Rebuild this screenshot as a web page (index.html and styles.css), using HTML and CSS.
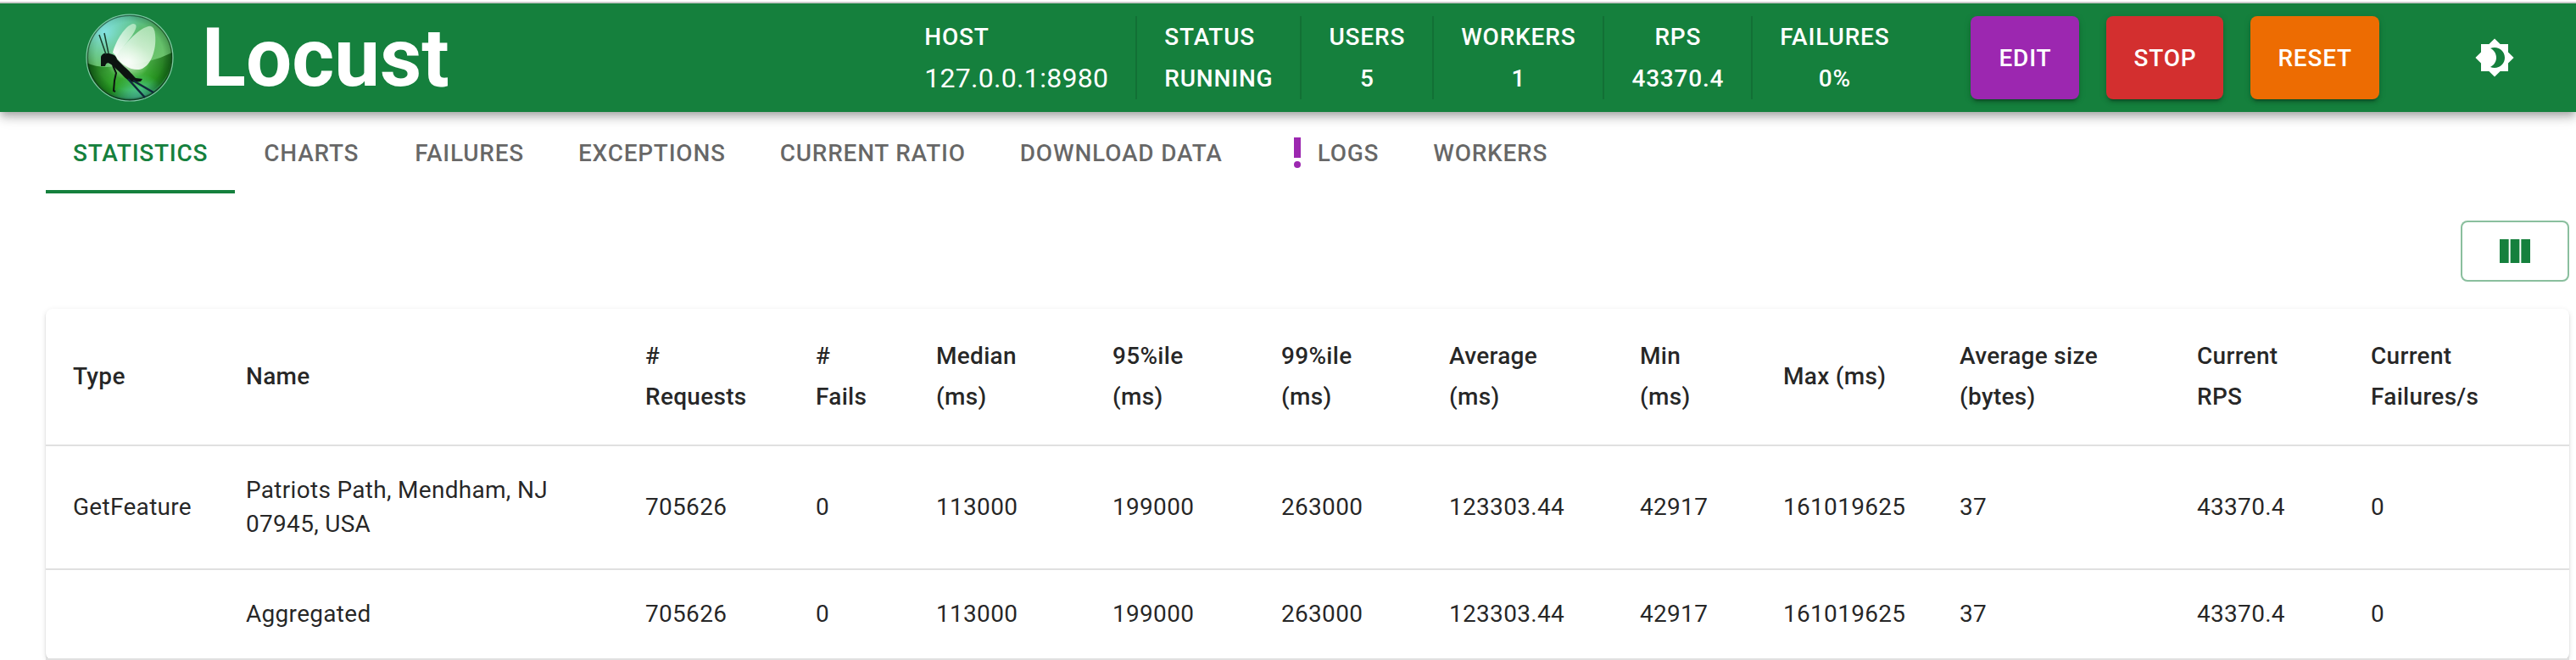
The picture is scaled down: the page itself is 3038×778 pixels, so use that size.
FILE: index.html
```html
<!DOCTYPE html>
<html lang="en">
<head>
<meta charset="utf-8">
<title>Locust</title>
<link rel="stylesheet" href="styles.css">
</head>
<body>
<header class="appbar">
  <div class="brand">
    <svg class="logo" viewBox="0 0 104 104" aria-hidden="true">
      <defs>
        <linearGradient id="orb" x1="0.35" y1="0" x2="0.6" y2="1">
          <stop offset="0" stop-color="#5fc8b0"/>
          <stop offset="0.25" stop-color="#5cba68"/>
          <stop offset="0.6" stop-color="#6cc46c"/>
          <stop offset="0.8" stop-color="#3fb437"/>
          <stop offset="1" stop-color="#3fbf90"/>
        </linearGradient>
        <radialGradient id="rim" cx="0.5" cy="0.48" r="0.52">
          <stop offset="0.75" stop-color="#043c12" stop-opacity="0"/>
          <stop offset="0.92" stop-color="#043c12" stop-opacity="0.3"/>
          <stop offset="1" stop-color="#012208" stop-opacity="0.9"/>
        </radialGradient>
        <radialGradient id="sky" cx="0.2" cy="0.2" r="0.42">
          <stop offset="0" stop-color="#86e4e8" stop-opacity="0.95"/>
          <stop offset="1" stop-color="#7fe0d0" stop-opacity="0"/>
        </radialGradient>
        <radialGradient id="glow" cx="0.5" cy="0.5" r="0.5">
          <stop offset="0" stop-color="#fff" stop-opacity="0.9"/>
          <stop offset="1" stop-color="#c9f5c4" stop-opacity="0"/>
        </radialGradient>
        <linearGradient id="wing" x1="0.2" y1="0.9" x2="0.7" y2="0">
          <stop offset="0" stop-color="#fff" stop-opacity="0.9"/>
          <stop offset="1" stop-color="#d5f5d9" stop-opacity="0.66"/>
        </linearGradient>
        <linearGradient id="shade" x1="0" y1="0" x2="1" y2="0">
          <stop offset="0" stop-color="#064a05" stop-opacity="0.9"/>
          <stop offset="0.3" stop-color="#128a0a" stop-opacity="0.5"/>
          <stop offset="0.65" stop-color="#1b9412" stop-opacity="0.35"/>
          <stop offset="1" stop-color="#064a05" stop-opacity="0.8"/>
        </linearGradient>
        <radialGradient id="teal" cx="0.6" cy="1" r="0.32">
          <stop offset="0" stop-color="#5fd8c0" stop-opacity="0.9"/>
          <stop offset="1" stop-color="#5fd8c0" stop-opacity="0"/>
        </radialGradient>
      </defs>
      <circle cx="52" cy="52" r="51" fill="url(#orb)"/>
      <path d="M1 58Q18 66 42 61Q76 59 102 46A51 51 0 0 1 1 58Z" fill="url(#shade)"/>
      <circle cx="52" cy="52" r="51" fill="url(#teal)"/>
      <circle cx="52" cy="52" r="51" fill="url(#rim)"/>
      <circle cx="52" cy="52" r="50" fill="url(#sky)"/>
      <circle cx="52" cy="52" r="49.6" fill="none" stroke="#052d14" stroke-opacity="0.55" stroke-width="1.2"/>
      <circle cx="52" cy="52" r="51" fill="none" stroke="#9adfc0" stroke-opacity="0.8" stroke-width="1.2"/>
      <ellipse cx="50" cy="56" rx="26" ry="22" fill="url(#glow)"/>
      <path d="M32 46C36 31 47 14 56 12Q61 12 59 18C55 29 43 39 36 50Z" fill="url(#wing)"/>
      <path d="M35 50C46 37 60 19 74 15Q81 13 82 25C84 44 76 64 63 66C53 67 42 60 35 50Z" fill="url(#wing)"/>
      <path d="M18 52C18 48 22 46 26 47C31 47 36 49 37 54L46 63C51 67 56 73 59 76L67 77L65 80L58 81C53 81 47 77 43 72C39 68 34 63 30 60C26 57 24 58 23 62H18Z" fill="#0c1310"/>
      <path d="M24 48L16 25M27 47L22 23" stroke="#1a3d2c" stroke-width="1.5" fill="none"/>
      <path d="M32 61L36 70L34 79L33 91L35 92" stroke="#0c1310" stroke-width="2" fill="none"/>
      <path d="M50 77L70 99M56 79L80 93" stroke="#10283b" stroke-width="2.5" fill="none"/>
    </svg>
    <span class="brand-name">Locust</span>
  </div>
  <div class="toolbar">
    <div class="stats">
      <div class="stat stat-start"><span>HOST</span><span class="host">127.0.0.1:8980</span></div>
      <div class="stat stat-start"><span>STATUS</span><span>RUNNING</span></div>
      <div class="stat"><span>USERS</span><span>5</span></div>
      <div class="stat"><span>WORKERS</span><span>1</span></div>
      <div class="stat"><span>RPS</span><span>43370.4</span></div>
      <div class="stat"><span>FAILURES</span><span>0%</span></div>
    </div>
    <div class="actions">
      <button class="btn btn-edit">EDIT</button>
      <button class="btn btn-stop">STOP</button>
      <button class="btn btn-reset">RESET</button>
    </div>
    <button class="theme-toggle" aria-label="Toggle theme">
      <svg class="icon" viewBox="0 0 24 24"><path d="M20 8.69V4h-4.69L12 .69 8.69 4H4v4.69L.69 12 4 15.31V20h4.69L12 23.31 15.31 20H20v-4.69L23.31 12 20 8.69zM12 18c-.89 0-1.74-.2-2.5-.55C11.56 16.5 13 14.42 13 12s-1.44-4.5-3.5-5.45C10.26 6.2 11.11 6 12 6c3.31 0 6 2.69 6 6s-2.69 6-6 6z"/></svg>
    </button>
  </div>
</header>
<main class="content">
  <nav class="tabs">
    <a class="tab tab-active">STATISTICS</a>
    <a class="tab">CHARTS</a>
    <a class="tab">FAILURES</a>
    <a class="tab">EXCEPTIONS</a>
    <a class="tab">CURRENT RATIO</a>
    <a class="tab tab-wide">DOWNLOAD DATA</a>
    <a class="tab"><svg class="icon alert" viewBox="0 0 24 24"><circle cx="12" cy="19" r="2"/><path d="M10 3h4v12h-4z"/></svg>LOGS</a>
    <a class="tab">WORKERS</a>
  </nav>
  <div class="table-tools">
    <button class="columns-btn" aria-label="Select columns">
      <svg class="icon" viewBox="0 0 24 24"><path d="M14.67 5v14H9.33V5h5.34zm1 14H21V5h-5.33v14zm-7.34 0V5H3v14h5.33z"/></svg>
    </button>
  </div>
  <div class="paper">
    <table class="table">
      <colgroup><col class="c1"><col class="c2"><col class="c3"><col class="c4"><col class="c5"><col class="c6"><col class="c7"><col class="c8"><col class="c9"><col class="c10"><col class="c11"><col class="c12"><col class="c13"></colgroup>
      <thead>
        <tr><th>Type</th><th>Name</th><th>#<br>Requests</th><th>#<br>Fails</th><th>Median<br>(ms)</th><th>95%ile<br>(ms)</th><th>99%ile<br>(ms)</th><th>Average<br>(ms)</th><th>Min<br>(ms)</th><th>Max (ms)</th><th>Average size<br>(bytes)</th><th>Current<br>RPS</th><th>Current<br>Failures/s</th></tr>
      </thead>
      <tbody>
        <tr><td>GetFeature</td><td>Patriots Path, Mendham, NJ<br>07945, USA</td><td>705626</td><td>0</td><td>113000</td><td>199000</td><td>263000</td><td>123303.44</td><td>42917</td><td>161019625</td><td>37</td><td>43370.4</td><td>0</td></tr>
        <tr><td></td><td>Aggregated</td><td>705626</td><td>0</td><td>113000</td><td>199000</td><td>263000</td><td>123303.44</td><td>42917</td><td>161019625</td><td>37</td><td>43370.4</td><td>0</td></tr>
      </tbody>
    </table>
  </div>
</main>
</body>
</html>
```
FILE: styles.css
```css
* { box-sizing: border-box; }
html { overflow: hidden; }
body {
  margin: 0;
  padding-top: 2px;
  background: #fff;
  color: rgba(0, 0, 0, 0.87);
  font-family: Roboto, "Liberation Sans", sans-serif;
  font-size: 28px;
}
button { font: inherit; letter-spacing: inherit; }
.icon { width: 48px; height: 48px; fill: currentColor; flex: none; }

.appbar {
  display: flex;
  justify-content: space-between;
  align-items: center;
  height: 130px;
  padding: 0 56px 0 101px;
  border-top: 2px solid #ccc;
  background: #15803d;
  color: #fff;
  box-shadow: 0 4px 8px -2px rgba(0, 0, 0, 0.2), 0 8px 10px 0 rgba(0, 0, 0, 0.14), 0 2px 20px 0 rgba(0, 0, 0, 0.12);
  clip-path: inset(0 0 -40px 0);
}
.brand { display: flex; align-items: center; gap: 33px; }
.logo { width: 104px; height: 104px; }
.brand-name { font-size: 96px; font-weight: 700; line-height: 1.167; }

.toolbar { display: flex; align-items: center; font-weight: 500; letter-spacing: 0.8px; }
.stats { display: flex; }
.stat {
  display: flex;
  flex-direction: column;
  align-items: center;
  padding: 0 32px;
  line-height: 49px;
}
.stat + .stat { border-left: 2px solid rgba(0, 0, 0, 0.12); }
.stat-start { align-items: flex-start; }
.host { font-size: 32px; font-weight: 400; line-height: 48px; letter-spacing: 0.3px; }

.actions { display: flex; gap: 32px; margin-left: 64px; }
.btn {
  min-width: 128px;
  height: 98px;
  padding: 0 32px;
  border: 0;
  border-radius: 8px;
  color: #fff;
  box-shadow: 0 6px 2px -4px rgba(0, 0, 0, 0.2), 0 4px 4px 0 rgba(0, 0, 0, 0.14), 0 2px 10px 0 rgba(0, 0, 0, 0.12);
}
.btn-edit { background: #9c27b0; }
.btn-stop { background: #d32f2f; }
.btn-reset { background: #ed6c02; }
.theme-toggle {
  display: flex;
  margin-left: 96px;
  padding: 16px;
  border: 0;
  background: none;
  color: #fff;
}

.content { padding: 0 8px 0 54px; }
.tabs { display: flex; height: 96px; }
.tab {
  display: flex;
  align-items: center;
  justify-content: center;
  min-width: 180px;
  padding: 0 32px;
  border-bottom: 4px solid transparent;
  border-top: 4px solid transparent;
  color: rgba(0, 0, 0, 0.6);
  font-weight: 500;
  letter-spacing: 0.75px;
}
.tab-wide { letter-spacing: 0.82px; }
.tab-active { color: #15803d; border-bottom-color: #15803d; }
.alert { color: #9c27b0; }

.table-tools { display: flex; justify-content: flex-end; padding: 32px 0; }
.columns-btn {
  display: flex;
  align-items: center;
  justify-content: center;
  width: 128px;
  height: 72px;
  padding: 0;
  border: 2px solid rgba(21, 128, 61, 0.5);
  border-radius: 8px;
  background: #fff;
  color: #15803d;
}
.paper {
  border-radius: 8px;
  background: #fff;
  box-shadow: 0 4px 2px -2px rgba(0, 0, 0, 0.2), 0 2px 2px 0 rgba(0, 0, 0, 0.14), 0 2px 6px 0 rgba(0, 0, 0, 0.12);
}
.table {
  width: 100%;
  table-layout: fixed;
  border-collapse: separate;
  border-spacing: 0;
  letter-spacing: 0.3px;
}
.table th, .table td {
  padding: 32px 0 32px 32px;
  border-bottom: 2px solid #e0e0e0;
  text-align: left;
  vertical-align: middle;
  white-space: nowrap;
  line-height: 40px;
}
.table th { font-weight: 500; line-height: 48px; }
.c1 { width: 204px; }
.c2 { width: 471px; }
.c3 { width: 201px; }
.c4 { width: 142px; }
.c5 { width: 208px; }
.c6 { width: 199px; }
.c7 { width: 198px; }
.c8 { width: 225px; }
.c9 { width: 169px; }
.c10 { width: 208px; }
.c11 { width: 280px; }
.c12 { width: 205px; }
```
